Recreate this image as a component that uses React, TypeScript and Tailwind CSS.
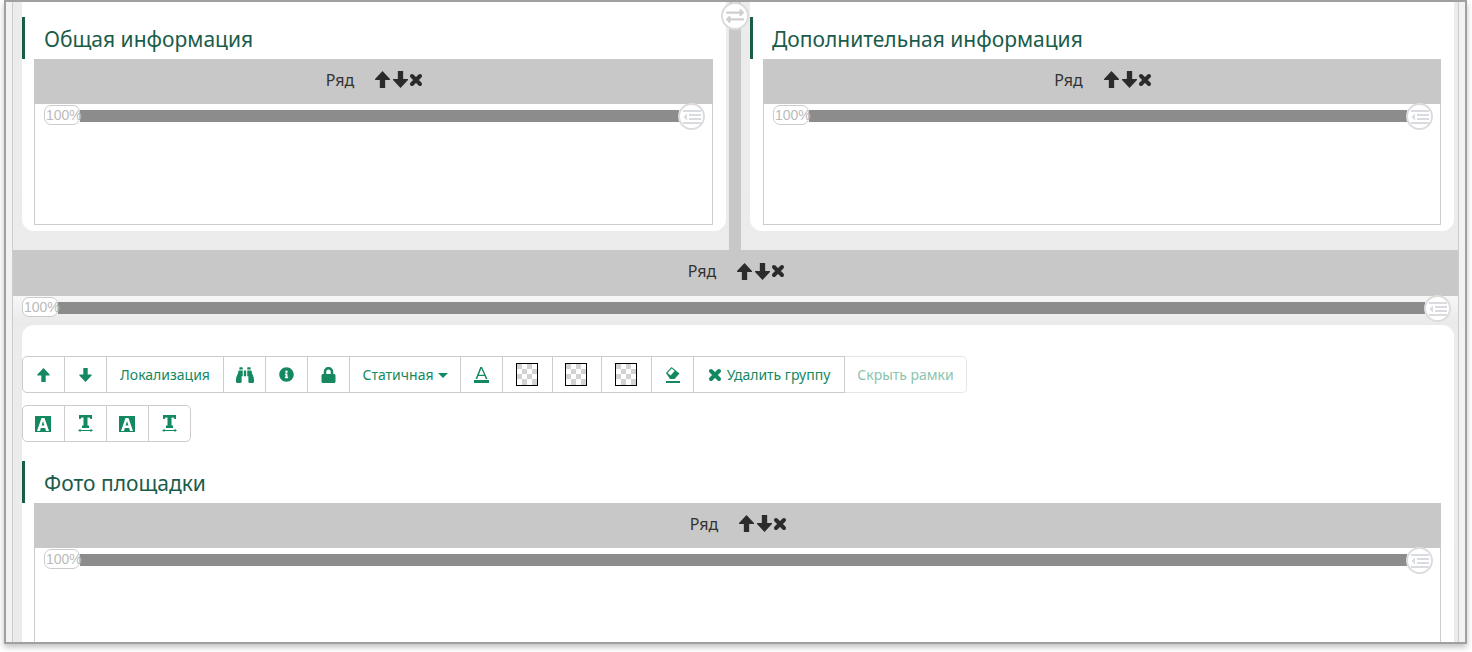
import React from 'react';
import { FaBinoculars, FaInfoCircle, FaLock, FaExchangeAlt } from 'react-icons/fa';

const UpArrow: React.FC<{ className?: string }> = ({ className }) => (
  <svg className={className} viewBox="0 0 14 16" fill="currentColor">
    <path d="M7 0 L14 7.5 V8.5 H9.5 V16 H4.5 V8.5 H0 V7.5 Z" />
  </svg>
);

const DownArrow: React.FC<{ className?: string }> = ({ className }) => (
  <svg className={className} viewBox="0 0 14 16" fill="currentColor">
    <path d="M7 16 L14 8.5 V7.5 H9.5 V0 H4.5 V7.5 H0 V8.5 Z" />
  </svg>
);

const Cross: React.FC<{ className?: string }> = ({ className }) => (
  <svg className={className} viewBox="0 0 14 14" fill="none" stroke="currentColor" strokeWidth="4" strokeLinecap="round">
    <path d="M3 3 L11 11 M11 3 L3 11" />
  </svg>
);

const RowHeader: React.FC<{ tall?: boolean }> = ({ tall }) => (
  <div className={`flex items-center justify-center bg-[#c8c8c8] pb-[4px] pl-[2px] text-[#333] ${tall ? 'h-[46px]' : 'h-[45px]'}`}>
    <span className="text-[16px]">Ряд</span>
    <span className="ml-[21px] flex items-center text-[#2b2b2b]">
      <UpArrow className="h-[17px] w-[15px]" />
      <DownArrow className="ml-[3px] h-[17px] w-[15px]" />
      <Cross className="ml-[1px] h-[14px] w-[14px]" />
    </span>
  </div>
);

const Slider: React.FC = () => (
  <div className="relative h-[12px] bg-[#8c8c8c]">
    <span className="absolute left-[-36px] top-[-5px] flex h-[20px] w-[36px] items-center whitespace-nowrap rounded-[7px] border border-[#ccc] bg-white pl-[1px] text-[14px] text-[#bbb] font-['Liberation_Sans',sans-serif]">
      100%
    </span>
    <span className="absolute right-[-26px] top-[-7px] flex h-[27px] w-[27px] items-center justify-center rounded-full border-2 border-[#dcdcdc] bg-white">
      <svg width="18" height="14" viewBox="0 0 18 14" fill="#d8dbe0">
        <rect x="0" y="0" width="18" height="2" />
        <rect x="6" y="4" width="12" height="2" />
        <rect x="6" y="8" width="12" height="2" />
        <rect x="0" y="12" width="18" height="2" />
        <path d="M4 3.5 V10.5 L0.5 7 Z" />
      </svg>
    </span>
  </div>
);

const Title: React.FC<{ text: string }> = ({ text }) => (
  <div className="flex h-[42px] items-end border-l-[3px] border-[#1a5c4a] pb-[6px] pl-[19px] text-[21px] leading-[28px] text-[#1a5c4a]">
    {text}
  </div>
);

const InfoCard: React.FC<{ title: string; boxClass: string }> = ({ title, boxClass }) => (
  <div className="h-[229px] w-[704px] rounded-b-[12px] bg-white pt-[15px]">
    <Title text={title} />
    <div className={boxClass}>
      <RowHeader />
      <div className="h-[121px] border-x border-b border-[#ccc] bg-white pl-[45px] pr-[33px] pt-[6px]">
        <Slider />
      </div>
    </div>
  </div>
);

const Checker: React.FC = () => (
  <svg className="mr-[2px]" width="22" height="23" viewBox="0 0 22 23">
    <rect width="22" height="23" fill="#fff" />
    <g fill="#d2d2d2">
      <rect x="1" y="1" width="5" height="5" />
      <rect x="11" y="1" width="5" height="5" />
      <rect x="6" y="6" width="5" height="5" />
      <rect x="16" y="6" width="5" height="5" />
      <rect x="1" y="11" width="5" height="5" />
      <rect x="11" y="11" width="5" height="5" />
      <rect x="6" y="16" width="5" height="6" />
      <rect x="16" y="16" width="5" height="6" />
    </g>
    <rect x="0.5" y="0.5" width="21" height="22" fill="none" stroke="#000" />
  </svg>
);

const FontIcon: React.FC = () => (
  <svg width="15" height="17" viewBox="0 0 15 17" fill="#14895f">
    <path d="M1.5 13 L6.3 1 H8 L13.5 13 H11.8 L10.6 10 H4.3 L3.2 13 Z M4.9 8.8 H10.1 L7.3 2.6 Z" />
    <rect x="0" y="14" width="15" height="3" />
  </svg>
);

const InvertedA: React.FC = () => (
  <svg className="mr-[2px]" width="16" height="16" viewBox="0 0 16 16">
    <rect width="16" height="16" fill="#14895f" />
    <path d="M2 15 L6.5 2 H9.5 L14 15 H11 L10.2 12 H5.8 L5 15 Z M6.6 9.5 H9.4 L8 5 Z" fill="#fff" />
  </svg>
);

const TextWidthIcon: React.FC = () => (
  <svg width="15" height="17" viewBox="0 0 15 17" fill="#14895f">
    <path d="M1 0 H14 V4 H12.5 L11.5 2.5 H9.5 V10.5 H11 V13 H4 V10.5 H5.5 V2.5 H3.5 L2.5 4 H1 Z" />
    <rect x="2" y="15" width="11" height="1" />
    <path d="M0 15.5 L2.5 13.8 V17 Z M15 15.5 L12.5 13.8 V17 Z" />
  </svg>
);

const EraserIcon: React.FC = () => (
  <svg width="16" height="17" viewBox="0 0 16 17">
    <path d="M1 7 L6.5 1 L14.5 7.5 L9.5 13 H5 Z" fill="#14895f" />
    <path d="M2.6 7 L6.7 2.6 L9.6 5 L5.6 9.4 Z" fill="#fff" />
    <rect x="1" y="15" width="14" height="2" fill="#14895f" />
  </svg>
);

const Caret: React.FC = () => (
  <svg className="ml-[4px] mt-[2px]" width="10" height="5" viewBox="0 0 10 5" fill="#14895f">
    <path d="M0 0 H10 L5 5 Z" />
  </svg>
);

const ToolButton: React.FC<{ w: string; children: React.ReactNode }> = ({ w, children }) => (
  <div className={`-ml-[1px] flex h-[37px] items-center justify-center border border-[#ccc] bg-white text-[14px] text-[#14895f] first:ml-0 first:rounded-l-[5px] last:rounded-r-[5px] ${w}`}>
    {children}
  </div>
);

const Toolbar: React.FC = () => (
  <>
    <div className="flex">
      <ToolButton w="w-[43px]"><UpArrow className="h-[14px] w-[13px]" /></ToolButton>
      <ToolButton w="w-[43px]"><DownArrow className="h-[14px] w-[13px]" /></ToolButton>
      <ToolButton w="w-[118px]">Локализация</ToolButton>
      <ToolButton w="w-[43px]"><FaBinoculars className="h-[18px] w-[18px]" /></ToolButton>
      <ToolButton w="w-[43px]"><FaInfoCircle className="h-[15px] w-[15px]" /></ToolButton>
      <ToolButton w="w-[43px]"><FaLock className="h-[16px] w-[15px]" /></ToolButton>
      <ToolButton w="w-[112px]">
        Статичная
        <Caret />
      </ToolButton>
      <ToolButton w="w-[43px]"><FontIcon /></ToolButton>
      <ToolButton w="w-[51px]"><Checker /></ToolButton>
      <ToolButton w="w-[50px]"><Checker /></ToolButton>
      <ToolButton w="w-[51px]"><Checker /></ToolButton>
      <ToolButton w="w-[43px]"><EraserIcon /></ToolButton>
      <ToolButton w="w-[152px]">
        <Cross className="mr-[5px] h-[14px] w-[14px]" />
        Удалить группу
      </ToolButton>
      <div className="flex h-[37px] w-[122px] items-center justify-center rounded-r-[5px] border border-l-0 border-[#e6e6e6] bg-white text-[14px] text-[#8bc4ae]">
        Скрыть рамки
      </div>
    </div>
    <div className="mt-[12px] flex">
      <ToolButton w="w-[43px]"><InvertedA /></ToolButton>
      <ToolButton w="w-[43px]"><TextWidthIcon /></ToolButton>
      <ToolButton w="w-[43px]"><InvertedA /></ToolButton>
      <ToolButton w="w-[43px]"><TextWidthIcon /></ToolButton>
    </div>
  </>
);

const App: React.FC = () => {
  return (
    <div className="h-[652px] w-[1472px] overflow-hidden bg-white pl-[4px] font-['Noto_Sans',sans-serif]">
      <div className="h-[644px] w-[1463px] overflow-hidden border-2 border-[#a0a0a0] bg-[#f2f2f2] px-[6px] shadow-[0_3px_6px_rgba(0,0,0,0.25)]">
        <div className="h-full overflow-hidden border-x border-[#ccc] bg-gradient-to-b from-[#ececec] to-[#ebebeb]">
          <div className="flex h-[248px]">
            <div className="ml-[9px]">
              <InfoCard title="Общая информация" boxClass="ml-[12px] w-[679px]" />
            </div>
            <div className="relative mx-[3px] w-[12px] bg-[#c8c8c8]">
              <span className="absolute left-[-8px] top-0 flex h-[28px] w-[28px] items-center justify-center rounded-full border-2 border-[#dcdcdc] bg-white text-[#cfcfcf]">
                <FaExchangeAlt className="h-[18px] w-[20px]" />
              </span>
            </div>
            <div className="ml-[6px]">
              <InfoCard title="Дополнительная информация" boxClass="ml-[13px] w-[678px]" />
            </div>
          </div>
          <RowHeader tall />
          <div className="h-[29px] bg-gradient-to-b from-[#f7f7f7] to-[#e9e9e9] pl-[45px] pr-[33px] pt-[6px]">
            <Slider />
          </div>
          <div className="ml-[9px] h-[400px] w-[1432px] rounded-t-[12px] bg-white pt-[31px]">
            <Toolbar />
            <div className="mt-[19px]">
              <Title text="Фото площадки" />
            </div>
            <div className="ml-[12px] w-[1407px]">
              <RowHeader />
              <div className="h-[200px] border-x border-[#ccc] bg-white pl-[45px] pr-[33px] pt-[6px]">
                <Slider />
              </div>
            </div>
          </div>
        </div>
      </div>
    </div>
  );
};

export default App;
